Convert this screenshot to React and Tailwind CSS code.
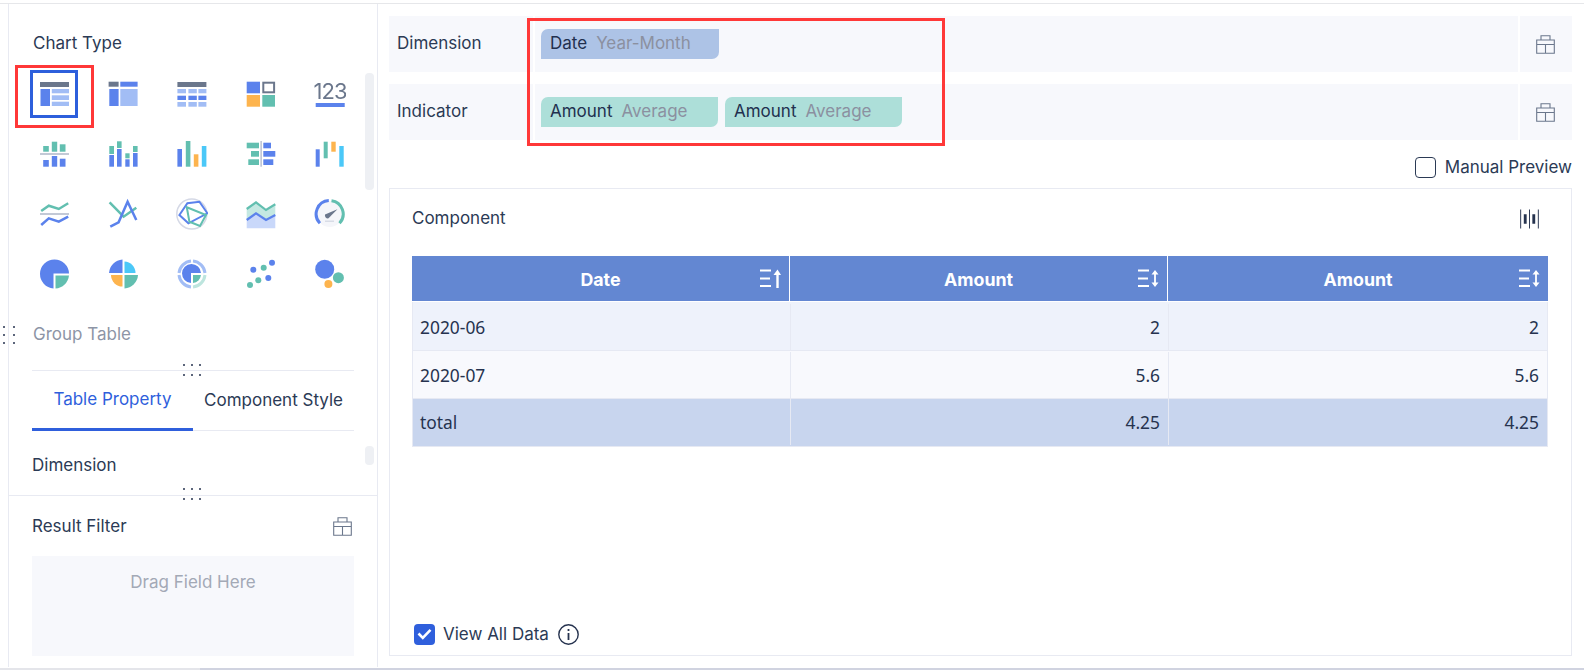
import React from "react";

const B = "#5b82ec", G = "#6b778c", L = "#a2bdf5", T = "#62bfb0", O = "#fdb44e", C = "#4bc8f8";

function R({ x, y, x2, y2, f }) {
  return <rect x={x} y={y} width={x2 - x} height={y2 - y} fill={f} />;
}

const icons = [
  <>
    <R x={2} y={4} x2={31} y2={9} f={G} />
    <R x={2.5} y={11} x2={12} y2={28} f={B} />
    <R x={13.8} y={11} x2={31} y2={15.3} f={L} />
    <R x={13.8} y={17.3} x2={31} y2={22} f={L} />
    <R x={13.8} y={23.7} x2={31} y2={28} f={L} />
  </>,
  <>
    <R x={1.6} y={3.7} x2={11.6} y2={8.7} f={G} />
    <R x={13.3} y={3.7} x2={30.6} y2={8.7} f={B} />
    <R x={2.3} y={11} x2={11.6} y2={28} f={B} />
    <R x={13.3} y={11} x2={30.6} y2={28} f={L} />
  </>,
  <>
    <R x={1.4} y={4} x2={30.4} y2={9} f={G} />
    {[[11, 15.3, L], [17.7, 22, B], [24, 28.7, L]].map(([a, b, f]) => (
      <React.Fragment key={a}>
        <R x={1.4} y={a} x2={10} y2={b} f={f} />
        <R x={12.4} y={a} x2={20.8} y2={b} f={f} />
        <R x={22.4} y={a} x2={30.4} y2={b} f={f} />
      </React.Fragment>
    ))}
  </>,
  <>
    <R x={1.7} y={3.7} x2={15} y2={15.3} f={B} />
    <rect x={18.3} y={4.7} width={10.8} height={9.6} fill="none" stroke={G} strokeWidth={2} />
    <R x={1.7} y={17} x2={15} y2={28.7} f={O} />
    <R x={17.3} y={17} x2={30} y2={28.7} f={T} />
  </>,
  <>
    <text x={16} y={21} textAnchor="middle" fontSize={22} fontFamily="Inter, sans-serif" fill={G} letterSpacing={-1}>123</text>
    <R x={1.7} y={25} x2={30.7} y2={29} f={B} />
  </>,
  <>
    <R x={5.2} y={8} x2={10.8} y2={13.7} f={T} />
    <R x={13.8} y={3.7} x2={19.2} y2={13.7} f={T} />
    <R x={21.8} y={6.3} x2={27.5} y2={13.7} f={T} />
    <R x={2} y={15} x2={31} y2={17} f="#c3c9d6" />
    <R x={5.2} y={22} x2={10.8} y2={28.7} f={B} />
    <R x={13.8} y={18} x2={19.2} y2={28.7} f={B} />
    <R x={21.8} y={20.7} x2={27.5} y2={28.7} f={B} />
  </>,
  <>
    <R x={2.3} y={8} x2={7} y2={16} f={T} />
    <R x={2.3} y={17} x2={7} y2={28.7} f={B} />
    <R x={10} y={3.3} x2={14.6} y2={10} f={T} />
    <R x={10} y={11} x2={14.6} y2={28.7} f={B} />
    <R x={18.3} y={15.3} x2={22.6} y2={20.3} f={T} />
    <R x={18.3} y={21.3} x2={22.6} y2={28.7} f={B} />
    <R x={26} y={8} x2={30.6} y2={14} f={T} />
    <R x={26} y={15} x2={30.6} y2={28.7} f={B} />
  </>,
  <>
    <R x={1.4} y={11} x2={6} y2={28.7} f={B} />
    <R x={9.8} y={3} x2={14.4} y2={28.7} f={T} />
    <R x={17.8} y={16.3} x2={22.4} y2={28.7} f={O} />
    <R x={25.8} y={8} x2={30.4} y2={28.7} f={C} />
  </>,
  <>
    <R x={15.3} y={3} x2={17} y2={28.7} f="#c3c9d6" />
    <R x={1.7} y={4.7} x2={14} y2={10.3} f={T} />
    <R x={6} y={13} x2={14} y2={18.7} f={T} />
    <R x={3.3} y={21.3} x2={14} y2={27} f={T} />
    <R x={18.3} y={4.7} x2={26} y2={10.3} f={B} />
    <R x={18.3} y={13} x2={30.3} y2={18.7} f={B} />
    <R x={18.3} y={21.3} x2={28.3} y2={27} f={B} />
  </>,
  <>
    <R x={1.7} y={11.3} x2={5.7} y2={28.7} f={B} />
    <R x={9.7} y={3.7} x2={13.7} y2={20.3} f={T} />
    <R x={17.3} y={3.7} x2={21.7} y2={13.7} f={O} />
    <R x={25.3} y={8} x2={29.7} y2={28.7} f={C} />
  </>,
  <g fill="none" strokeWidth={2.5}>
    <polyline points="3.2,13 10.8,7.7 20.8,11 30.2,5.3" stroke={T} />
    <line x1={2} y1={16} x2={31} y2={16} stroke="#c3c9d6" strokeWidth={2} />
    <polyline points="3.2,27 10.8,20.3 20.8,23.7 30.2,18.7" stroke={B} />
  </g>,
  <g fill="none" strokeWidth={2.5}>
    <polyline points="2.6,4.3 16.6,18.7 29.3,9.7" stroke={T} />
    <polyline points="3.3,28.7 11.6,24.3 20.6,3.7 29.3,22" stroke={B} />
  </g>,
  <g fill="none">
    <circle cx={15.8} cy={16} r={15} stroke="#d5d9e6" strokeWidth={1.5} />
    <polygon points="3.4,17 11.4,5.3 23.4,3.7 31.4,15.3 12.4,25.3" stroke={B} strokeWidth={2} />
    <polygon points="10.8,9.3 30,17 24,28 13.4,23.7" stroke={T} strokeWidth={2} />
  </g>,
  <>
    <polygon points="1.7,11 11,4.3 21,12 30.3,6.3 30.3,17 21,22 11,15.3 1.7,22" fill="#c4e8e2" />
    <polygon points="1.7,22 11,15.3 21,22 30.3,17 30.3,30.3 1.7,30.3" fill="#c9d8fa" />
    <polyline points="1.7,11 11,4.3 21,12 30.3,6.3" fill="none" stroke={T} strokeWidth={2.2} />
    <polyline points="1.7,22 11,15.3 21,22 30.3,17" fill="none" stroke={B} strokeWidth={2.2} />
  </>,
  <>
    <circle cx={15.7} cy={16} r={13} fill="#f5f6fa" />
    <path d="M5.9 25.2A13.4 13.4 0 0 1 14.8 2.6" fill="none" stroke={B} strokeWidth={3} />
    <path d="M17.5 2.7A13.4 13.4 0 0 1 25.5 25.2" fill="none" stroke={T} strokeWidth={3} />
    <path d="M23.4 11.3L14.5 20.3A3 3 0 0 1 11 16.5Z" fill={G} />
    <R x={11} y={22.5} x2={20} y2={24} f="#d8dce6" />
  </>,
  <>
    <path d="M31 15.5A14.5 14.5 0 1 0 15.5 30.5V15.5Z" fill={B} />
    <path d="M17.5 17.5H31A14.5 14.5 0 0 1 17.5 30.5Z" fill={T} />
  </>,
  <>
    <path d="M15.5 15V1.5A14.5 14.5 0 0 0 2 15Z" fill={B} />
    <path d="M17.5 15V3.5A11.5 11.5 0 0 1 28.5 15Z" fill={C} />
    <path d="M15.5 17V28.5A11.5 11.5 0 0 1 4 17Z" fill={O} />
    <path d="M17.5 17H31A14.5 14.5 0 0 1 17.5 30.5Z" fill={T} />
  </>,
  <>
    <path d="M15 3A13.5 13.5 0 0 0 3 15" fill="none" stroke={L} strokeWidth={3} />
    <path d="M17 3A13.5 13.5 0 0 1 29 15" fill="none" stroke={L} strokeWidth={3} />
    <path d="M3 17A13.5 13.5 0 0 0 15 29" fill="none" stroke={L} strokeWidth={3} />
    <path d="M17 29A13.5 13.5 0 0 0 29 17" fill="none" stroke="#bde5de" strokeWidth={3} />
    <path d="M25 15A9.5 9.5 0 1 0 15 25V15Z" fill={B} />
    <path d="M17 17H25A9 9 0 0 1 17 25Z" fill={T} />
  </>,
  <>
    <circle cx={8.3} cy={11.7} r={3} fill={B} />
    <circle cx={27} cy={4.7} r={3} fill={B} />
    <circle cx={23.3} cy={20} r={3} fill={B} />
    <circle cx={18.7} cy={9.7} r={3} fill={T} />
    <circle cx={13.3} cy={22.3} r={3} fill={T} />
    <circle cx={5} cy={27} r={3} fill={T} />
  </>,
  <>
    <circle cx={10.7} cy={11.3} r={9.5} fill={B} />
    <circle cx={24.4} cy={19.7} r={5.5} fill={T} />
    <circle cx={14.4} cy={26} r={4} fill={O} />
  </>,
];

function Toolbox() {
  return (
    <svg width="19" height="19" viewBox="0 0 19 19" fill="none" stroke="#6b778c" strokeWidth="1.1">
      <path d="M5 5V.7H14V5M.7 5H18.3V18.3H.7ZM.7 9.5H18.3M9.5 9.5V18.3" />
    </svg>
  );
}

function Sort({ single }) {
  return (
    <svg width="21" height="19" viewBox="0 0 21 19" className="absolute right-[8px] top-[13px]" fill="none" stroke="#fff" strokeWidth="2">
      <path d="M0 1.5H11M0 9.5H10M0 17H11" />
      {single ? (
        <>
          <path d="M17.5 19V4" strokeWidth="2.4" />
          <path d="M13.5 6L17.5 0.5L21 6Z" fill="#fff" stroke="none" />
        </>
      ) : (
        <>
          <path d="M17 4V15" strokeWidth="1.8" />
          <path d="M13.5 5.5L17 1L20.5 5.5ZM13.5 13.5L17 18L20.5 13.5Z" fill="#fff" stroke="none" />
        </>
      )}
    </svg>
  );
}

function Dots({ cols = 3, rows = 2, className }) {
  return (
    <div className={className}>
      {Array.from({ length: rows * cols }).map((_, i) => (
        <span key={i} className="block w-[2px] h-[2px] rounded-full bg-[#26334f]" />
      ))}
    </div>
  );
}

function Pill({ name, sub, bg, w }) {
  return (
    <div className={`h-[30px] ${w} ${bg} rounded-tl-[7px] rounded-br-[7px] flex items-center pl-[9px] gap-[9px] text-[17px]`}>
      <span className="text-[#22304f]">{name}</span>
      <span className="text-[#8b90a0]">{sub}</span>
    </div>
  );
}

function FieldRow({ label, children }) {
  return (
    <div className="h-[56px] flex gap-[2px]">
      <div className="w-[144px] bg-[#f7f8fc] flex items-center pl-[8px] text-[17px]">{label}</div>
      <div className="flex-1 bg-[#f7f8fc] flex items-center pl-[6px] gap-[7px]">{children}</div>
      <div className="w-[52px] bg-[#f7f8fc] flex items-center justify-center pr-[2px]"><Toolbox /></div>
    </div>
  );
}

const rows = [
  { c: "2020-06", v: "2", bg: "bg-[#eef2fb]", h: "h-[49px] pt-[2px]" },
  { c: "2020-07", v: "5.6", bg: "bg-[#f8f9fd]", h: "h-[48px] pt-[1px]" },
  { c: "total", v: "4.25", bg: "bg-[#c8d5ee]", h: "h-[48px] pb-[1px]" },
];

export default function App() {
  return (
    <div className="relative w-[1584px] h-[670px] overflow-hidden bg-white text-[#2b3a55] font-['Inter','Liberation_Sans',sans-serif]">
      <div className="mt-[3px] border-t border-[#e6e7ea] h-[664px] flex">
        <aside className="w-[370px] ml-[8px] border-l border-r border-[#e8eaf2] shrink-0 h-full flex flex-col">
          <section className="relative h-[492px] border-b border-[#e8eaf2] shrink-0">
            <div className="pl-[24px] pt-[27px] text-[17px] leading-[24px]">Chart Type</div>
            <div className="mt-[9px] ml-[10px] grid grid-cols-[repeat(5,69.2px)] auto-rows-[60px]">
              {icons.map((ic, i) => (
                <div key={i} className="flex items-center justify-center">
                  <svg width="32" height="32" viewBox="0 0 32 32" className="blur-[0.4px]">{ic}</svg>
                </div>
              ))}
            </div>
            <div className="mt-[18px] pl-[24px] text-[17px] leading-[24px] text-[#8d95a6]">Group Table</div>
            <div className="mt-[24px] mx-[23px] w-[322px] border-t border-[#e8eaf2]">
              <div className="flex h-[60px] border-b border-[#e8eaf2] text-[17px]">
                <div className="w-1/2 h-[60px] border-b-[3px] border-[#2f5fdc] text-[#2f5fdc] flex items-center justify-center pt-[1px]">Table Property</div>
                <div className="w-1/2 flex items-center justify-center pt-[1px]">Component Style</div>
              </div>
            </div>
            <div className="mt-[22px] pl-[23px] text-[17px] leading-[24px]">Dimension</div>
            <div className="absolute left-[356px] top-[69px] w-[9px] h-[117px] rounded-[4px] bg-[#eef0f4]" />
            <div className="absolute left-[356px] top-[442px] w-[9px] h-[19px] rounded-[4px] bg-[#eef0f4]" />
          </section>
          <section className="px-[23px]">
            <div className="mt-[18px] h-[24px] flex items-center justify-between text-[17px]">
              <span className="pt-[1px]">Result Filter</span>
              <span className="mr-[2px]"><Toolbox /></span>
            </div>
            <div className="mt-[18px] h-[100px] w-[322px] bg-[#f7f8fc] text-center pt-[14px] text-[17px] leading-[24px] text-[#a3a9b6]">Drag Field Here</div>
          </section>
        </aside>
        <main className="flex-1 pl-[11px] pr-[12px] pt-[12px]">
          <FieldRow label="Dimension">
            <Pill name="Date" sub="Year-Month" bg="bg-[#adc3e6]" w="w-[178px]" />
          </FieldRow>
          <div className="mt-[12px]">
            <FieldRow label="Indicator">
              <Pill name="Amount" sub="Average" bg="bg-[#addfd9]" w="w-[177px]" />
              <Pill name="Amount" sub="Average" bg="bg-[#addfd9]" w="w-[177px]" />
            </FieldRow>
          </div>
          <div className="h-[48px] flex items-center justify-end gap-[9px] text-[17px] pt-[7px]">
            <span className="w-[21px] h-[21px] rounded-[4px] border border-[#2b3a55]" />
            <span>Manual Preview</span>
          </div>
          <div className="relative h-[468px] border border-[#e8eaf2] px-[22px]">
            <div className="h-[67px] flex items-center justify-between text-[17px] pb-[8px]">
              <span>Component</span>
              <svg width="19" height="20" viewBox="0 0 20 20" className="mr-[10px]">
                <path d="M.7 0V20M10 0V20M19.3 0V20" stroke="#26334f" strokeWidth="1" />
                <path d="M4 5H7V15H4ZM13 5H16V15H13Z" fill="#26334f" />
              </svg>
            </div>
            <div className="w-[1136px]">
              <div className="grid grid-cols-[378px_378px_1fr] h-[46px] bg-[#6387d2] text-white font-bold text-[17.8px] border-b border-white">
                {["Date", "Amount", "Amount"].map((h, i) => (
                  <div key={i} className="relative flex items-center justify-center pt-[3px] border-r border-white last:border-r-0">
                    {h}
                    <Sort single={i === 0} />
                  </div>
                ))}
              </div>
              {rows.map((r) => (
                <div key={r.c} className={`grid grid-cols-[378px_378px_1fr] ${r.h} ${r.bg} border border-t-0 border-[#e6e9f3] font-['Noto_Sans',sans-serif] text-[17.4px] text-[#26334f]`}>
                  <div className="flex items-center pl-[7px] border-r border-[#e6e9f3]">{r.c}</div>
                  <div className="flex items-center justify-end pr-[8px] border-r border-[#e6e9f3]">{r.v}</div>
                  <div className="flex items-center justify-end pr-[8px]">{r.v}</div>
                </div>
              ))}
            </div>
            <div className="absolute left-[24px] bottom-[8px] flex items-center text-[17px]">
              <span className="w-[21px] h-[21px] rounded-[4px] bg-[#2f5fdc] flex items-center justify-center">
                <svg width="15" height="12" viewBox="0 0 15 12" fill="none" stroke="#fff" strokeWidth="2.6"><path d="M1.5 5.5L5.8 9.8L13.5 1.8" /></svg>
              </span>
              <span className="ml-[8px]">View All Data</span>
              <svg width="21" height="21" viewBox="0 0 21 21" className="ml-[9px]" fill="none" stroke="#26334f" strokeWidth="1.4">
                <circle cx="10.5" cy="10.5" r="9.7" />
                <path d="M10.5 9V16" strokeWidth="1.8" />
                <path d="M10.5 5V7" strokeWidth="1.8" />
              </svg>
            </div>
          </div>
        </main>
      </div>
      <div className="absolute left-0 right-0 top-[668px] h-[2px] bg-[#e4e5ea]" />
      <div className="absolute left-[200px] right-0 top-[668px] h-[2px] bg-[#d0d3e0]" />
      <div className="absolute left-[15px] top-[65px] w-[79px] h-[63px] border-[3px] border-[#ff3838]" />
      <div className="absolute left-[30px] top-[70px] w-[48px] h-[48px] border-[3.5px] border-[#2d5fdc]" />
      <div className="absolute left-[527px] top-[18px] w-[418px] h-[128px] border-[3px] border-[#ff3838]" />
      <Dots cols={2} rows={3} className="absolute left-[3px] top-[326px] grid grid-cols-2 gap-x-[8px] gap-y-[6px]" />
      <Dots className="absolute left-[183px] top-[364px] grid grid-cols-3 gap-x-[6px] gap-y-[8px]" />
      <Dots className="absolute left-[183px] top-[488px] grid grid-cols-3 gap-x-[6px] gap-y-[8px]" />
    </div>
  );
}
